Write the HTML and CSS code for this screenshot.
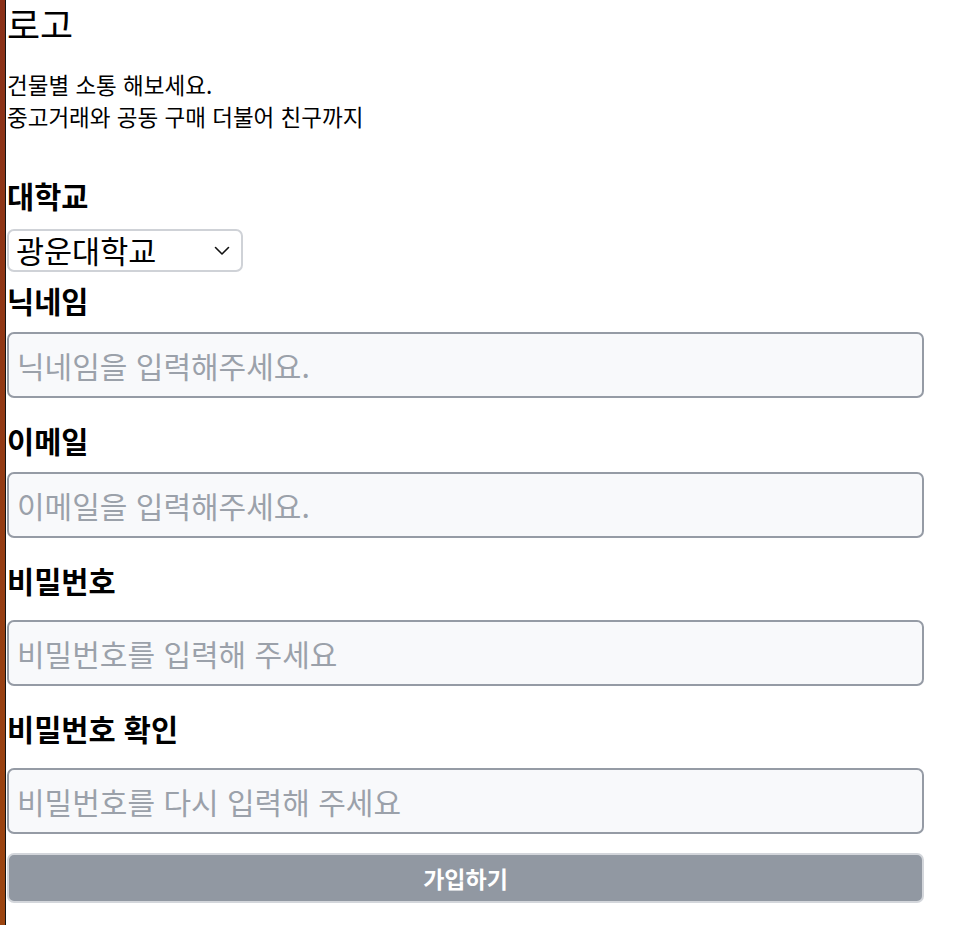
FILE: index.html
```html
<!DOCTYPE html>
<html lang="ko">
<head>
<meta charset="utf-8">
<title>회원가입</title>
<link rel="stylesheet" href="styles.css">
</head>
<body>
<div class="page">
  <h1 class="logo">로고</h1>
  <p class="intro">건물별 소통 해보세요.<br>중고거래와 공동 구매 더불어 친구까지</p>
  <form class="form">
    <label class="label label-school" for="school">대학교</label>
    <div class="select-wrap">
      <select id="school" class="select">
        <option>광운대학교</option>
      </select>
      <svg class="chevron" width="16" height="10" viewBox="0 0 16 10" aria-hidden="true"><path d="M1.5 1.5 L8 8 L14.5 1.5" fill="none" stroke="#111" stroke-width="1.6" stroke-linecap="round" stroke-linejoin="round"/></svg>
    </div>
    <label class="label label-first" for="nick">닉네임</label>
    <input id="nick" class="input" type="text" placeholder="닉네임을 입력해주세요.">
    <label class="label" for="email">이메일</label>
    <input id="email" class="input" type="email" placeholder="이메일을 입력해주세요.">
    <label class="label" for="pw">비밀번호</label>
    <input id="pw" class="input input-pw" type="password" placeholder="비밀번호를 입력해 주세요">
    <label class="label" for="pw2">비밀번호 확인</label>
    <input id="pw2" class="input input-pw" type="password" placeholder="비밀번호를 다시 입력해 주세요">
    <button type="button" class="submit">가입하기</button>
  </form>
</div>
</body>
</html>
```
FILE: styles.css
```css
html, body {
  margin: 0;
  padding: 0;
}

body {
  font-family: "Noto Sans CJK KR", "Noto Sans", sans-serif;
  color: #000;
}

.page {
  min-height: 100vh;
  box-sizing: border-box;
  padding: 0 29px 0 7px;
  background:
    linear-gradient(to right, transparent 5px, #141414 5px, #141414 6px, #ffffff 6px),
    linear-gradient(to bottom, #8a3018, #9c4510);
}

.logo {
  margin: 0;
  padding-top: 1px;
  font-size: 36px;
  line-height: 44px;
  font-weight: 400;
}

.intro {
  margin: 23px 0 0;
  font-size: 22.5px;
  line-height: 32px;
}

.form {
  display: flex;
  flex-direction: column;
  align-items: stretch;
}

.label {
  display: block;
  margin-top: 24px;
  font-size: 29.5px;
  line-height: 36px;
  font-weight: 700;
}

.label-school {
  margin-top: 45px;
}

.label-first {
  margin-top: 10px;
}

.select-wrap {
  position: relative;
  align-self: flex-start;
  margin-top: 16px;
  width: 236px;
  height: 43px;
}

.select {
  appearance: none;
  -webkit-appearance: none;
  box-sizing: border-box;
  width: 100%;
  height: 100%;
  margin: 0;
  padding: 0 30px 0 7px;
  border: 2px solid #cfd2d7;
  border-radius: 7px;
  background: #fff;
  font-family: inherit;
  font-size: 30.5px;
  line-height: 39px;
  color: #000;
}

.chevron {
  position: absolute;
  right: 13px;
  top: 17px;
  pointer-events: none;
}

.input {
  box-sizing: border-box;
  width: 100%;
  height: 66px;
  margin: 14px 0 0;
  padding: 0 8px;
  border: 2px solid #959ba5;
  border-radius: 7px;
  background: #f8f9fb;
  font-family: inherit;
  font-size: 30px;
  color: #111;
  outline: none;
}

.input-pw {
  margin-top: 22px;
}

.input::placeholder {
  color: #9ba1aa;
}

.submit {
  box-sizing: border-box;
  width: 100%;
  height: 50px;
  margin-top: 19px;
  border: 2px solid #d3d6db;
  border-radius: 7px;
  background: #9198a2;
  color: #fff;
  font-family: inherit;
  font-size: 23px;
  font-weight: 700;
  cursor: pointer;
}
```
